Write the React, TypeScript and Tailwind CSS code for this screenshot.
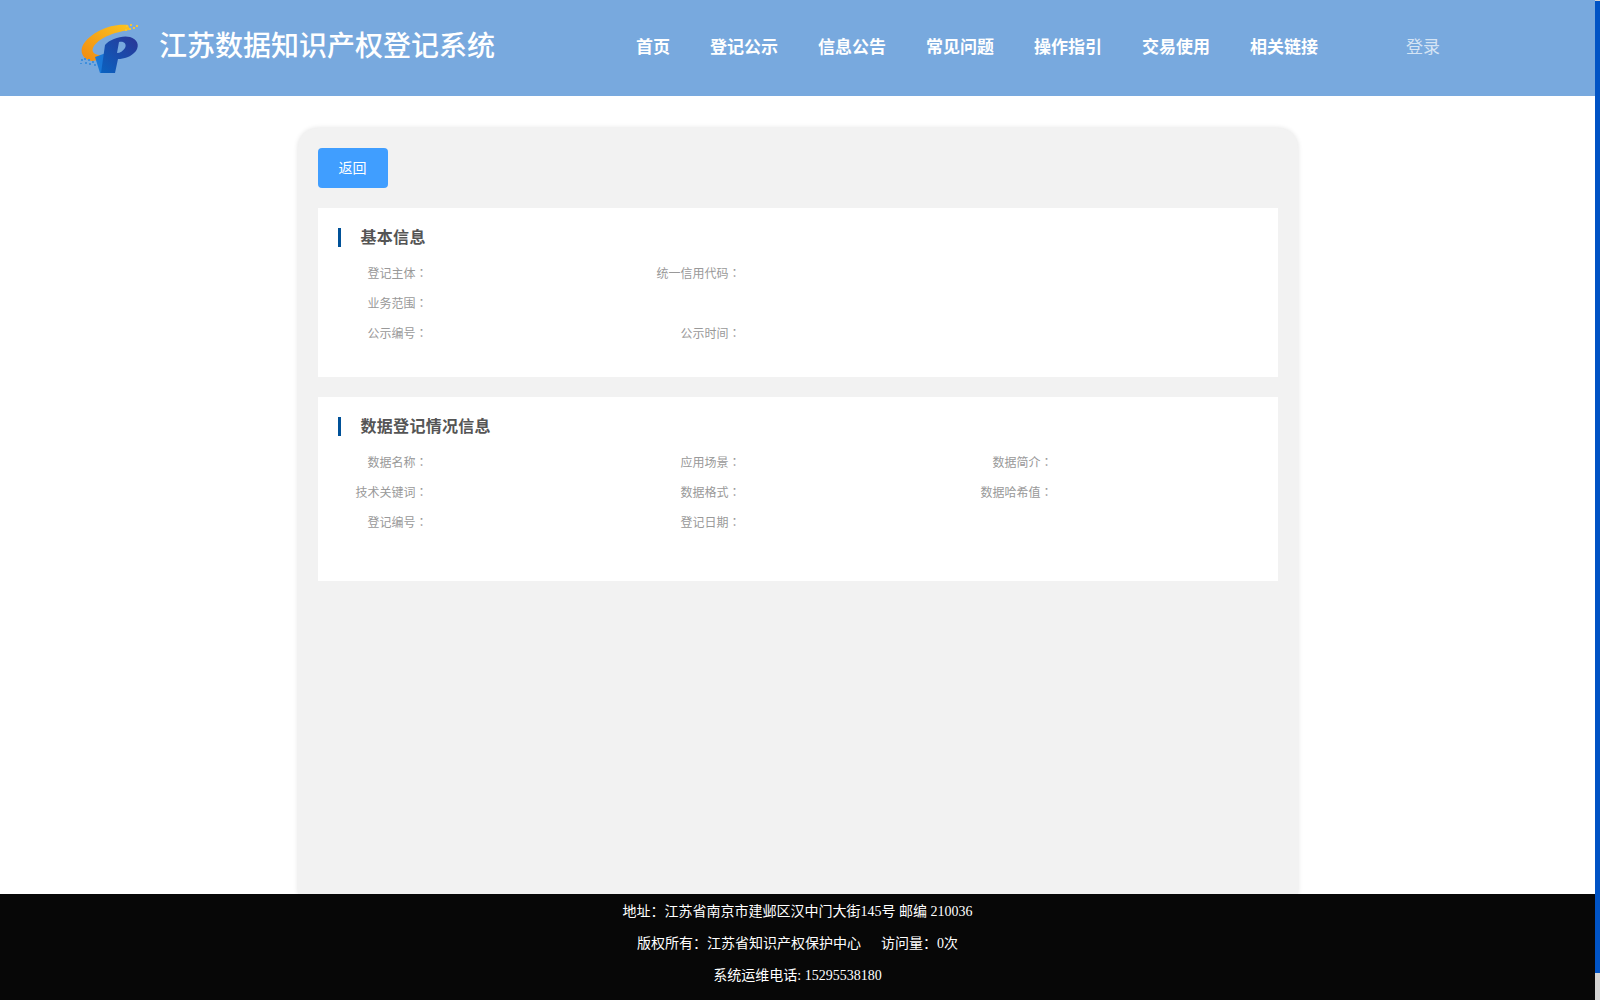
const navItems = ['登记公示', '信息公告', '常见问题', '操作指引', '交易使用', '相关链接'];

const Logo = () => (
  <svg className="w-[60px] h-[54px] shrink-0" viewBox="80 18 60 54" xmlns="http://www.w3.org/2000/svg">
    <defs>
      <linearGradient id="swoosh" x1="0" y1="1" x2="1" y2="0">
        <stop offset="0" stopColor="#f08a12" />
        <stop offset="1" stopColor="#fcc41e" />
      </linearGradient>
      <linearGradient id="pBlue" x1="0" y1="1" x2="1" y2="0">
        <stop offset="0" stopColor="#0a62c0" />
        <stop offset="1" stopColor="#2a3596" />
      </linearGradient>
    </defs>
    <path d="M128 22C110 20 90 30 83 42C79 50 84 57 92 58L104 56L104 52C96 53 91 50 93 45C96 38 108 30 130 27Z" fill="url(#swoosh)" />
    <path d="M95 54L106 50L103 70L100 70Z" fill="#1a78d8" />
    <path fillRule="evenodd" d="M105 42C110 36 122 32 130 34C137 36 140 42 136 48C131 54 124 56 118 56L115 70L101 70ZM119 39C124 38 127 41 125 45C123 48 120 50 117 50Z" fill="url(#pBlue)" />
    <g fill="#f5c437">
      <rect x="126" y="22" width="2" height="2" />
      <rect x="130" y="21" width="2" height="2" />
      <rect x="129" y="25" width="2" height="2" />
      <rect x="133" y="24" width="2" height="2" />
      <rect x="136" y="22" width="2" height="2" />
      <rect x="125" y="26" width="2" height="2" />
    </g>
    <g fill="#3f8fdc">
      <rect x="81" y="56" width="2" height="2" />
      <rect x="84" y="55" width="2" height="2" />
      <rect x="88" y="56" width="2" height="2" />
      <rect x="85" y="59" width="2" height="2" />
      <rect x="89" y="60" width="2" height="2" />
      <rect x="92" y="58" width="2" height="2" />
      <rect x="94" y="61" width="2" height="2" />
      <rect x="80" y="60" width="2" height="1" />
    </g>
  </svg>
);

const Field = ({ label }: { label: string }) => (
  <div className="h-[30px] flex items-center">
    <span className="w-[90px] text-right text-xs text-[#999] whitespace-nowrap">
      {label}
      {/* the full-width colon sits centred in the TC face, left in SC */}
      <span className="leading-[0] [font-family:'Noto_Sans_CJK_TC',serif]">：</span>
    </span>
  </div>
);

const SectionTitle = ({ children }: { children: string }) => (
  <div className="flex items-center h-[19px] mb-3">
    <span className="w-[3px] h-[19px] bg-[#005198]"></span>
    <h3 className="ml-5 text-base font-bold tracking-[0.3px] text-[#555]">{children}</h3>
  </div>
);

export default function App() {
  return (
    <div className="h-screen overflow-hidden flex bg-white [font-family:'Liberation_Serif','Noto_Sans_CJK_SC',serif]">
      <div className="flex-1 min-w-0 flex flex-col">
        <header className="h-24 shrink-0 bg-[#78a9de] flex items-center pl-20">
          <Logo />
          <h1 className="ml-[19px] text-[28px] font-medium text-white whitespace-nowrap -mt-[2px]">江苏数据知识产权登记系统</h1>
          <nav className="ml-[141px] flex items-center text-[17px] font-bold text-white">
            <a className="w-[74px]">首页</a>
            {navItems.map((item) => (
              <a key={item} className="w-[108px] whitespace-nowrap">{item}</a>
            ))}
          </nav>
          <a className="ml-[48px] text-[17px] text-white/70">登录</a>
        </header>

        <main className="flex-1 min-h-0 flex justify-center pt-8">
          <div className="w-[1000px] rounded-t-[20px] bg-[#f2f2f2] shadow-[0_0_5px_rgba(0,0,0,0.12)] p-5 flex flex-col gap-5">
            <button className="w-[70px] h-10 pt-px rounded bg-[#409eff] text-sm text-white">返回</button>

            <section className="bg-white pt-5 pl-5 pb-7">
              <SectionTitle>基本信息</SectionTitle>
              <div className="grid grid-cols-[313px_312px_1fr]">
                <Field label="登记主体" />
                <Field label="统一信用代码" />
                <div></div>
                <Field label="业务范围" />
                <div></div>
                <div></div>
                <Field label="公示编号" />
                <Field label="公示时间" />
              </div>
            </section>

            <section className="bg-white pt-5 pl-5 pb-[43px]">
              <SectionTitle>数据登记情况信息</SectionTitle>
              <div className="grid grid-cols-[313px_312px_1fr]">
                <Field label="数据名称" />
                <Field label="应用场景" />
                <Field label="数据简介" />
                <Field label="技术关键词" />
                <Field label="数据格式" />
                <Field label="数据哈希值" />
                <Field label="登记编号" />
                <Field label="登记日期" />
              </div>
            </section>
          </div>
        </main>

        <footer className="h-[106px] shrink-0 bg-[#070707] pt-[2px] text-center text-sm leading-8 text-white">
          <p>地址：江苏省南京市建邺区汉中门大街145号 邮编 210036</p>
          <p>
            版权所有：江苏省知识产权保护中心<span className="ml-5">访问量：0次</span>
          </p>
          <p>系统运维电话: 15295538180</p>
        </footer>
      </div>

      {/* scrollbar */}
      <div className="w-[5px] shrink-0 bg-[#d3d3d3]">
        <div className="h-[972px] mt-px bg-[#0053c5]"></div>
      </div>
    </div>
  );
}
